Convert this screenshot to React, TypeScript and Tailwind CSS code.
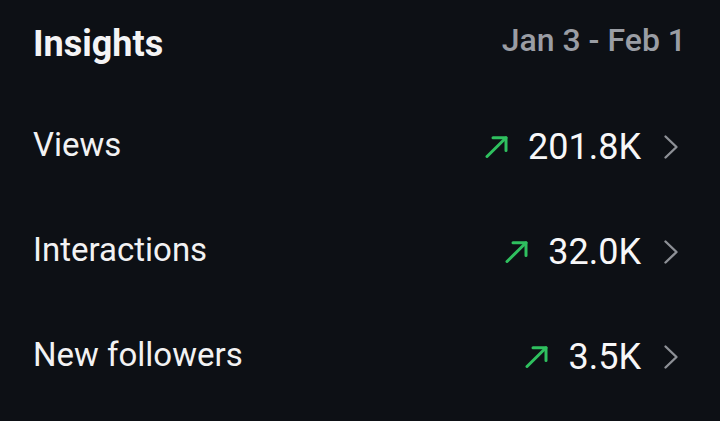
import React from "react";

const rows = [
  { label: "Views", value: "201.8K" },
  { label: "Interactions", value: "32.0K" },
  { label: "New followers", value: "3.5K" },
];

function TrendUp() {
  return (
    <svg width="24" height="22" viewBox="0 0 24 22" fill="none" className="shrink-0">
      <path d="M2 20.5 L21 1.8" stroke="#2fc05f" strokeWidth="3" strokeLinecap="round" />
      <path d="M8 1.8 H21 V14.5" stroke="#2fc05f" strokeWidth="3" strokeLinecap="round" strokeLinejoin="round" />
    </svg>
  );
}

function Chevron() {
  return (
    <svg width="16" height="26" viewBox="0 0 16 26" fill="none" className="shrink-0">
      <path d="M2.5 2.5 L13.5 13 L2.5 23.5" stroke="#8d9096" strokeWidth="2.4" strokeLinecap="round" strokeLinejoin="round" />
    </svg>
  );
}

export default function App() {
  return (
    <div className="w-[720px] h-[421px] bg-[#0d1015] overflow-hidden font-['Roboto',sans-serif]">
      <div className="pl-[33px] pr-[34px]">
        {/* Header */}
        <div className="h-[94px] pb-[6px] flex items-center justify-between">
          <h1 className="text-[36px] leading-[36px] font-bold text-[#f4f4f5]">Insights</h1>
          <span className="-mt-[8px] text-[32px] leading-[32px] font-medium text-[#9a9da4]">Jan 3 - Feb 1</span>
        </div>

        {/* Metric rows */}
        {rows.map((r) => (
          <div key={r.label} className="h-[105px] flex items-center justify-between pr-[7px]">
            <span className="-mt-[5px] text-[33px] leading-[33px] text-[#f2f2f3]">{r.label}</span>
            <div className="flex items-center">
              <TrendUp />
              <span className="ml-[19px] text-[36px] leading-[36px] text-[#f7f7f8]">{r.value}</span>
              <span className="ml-[22px]">
                <Chevron />
              </span>
            </div>
          </div>
        ))}
      </div>
    </div>
  );
}
